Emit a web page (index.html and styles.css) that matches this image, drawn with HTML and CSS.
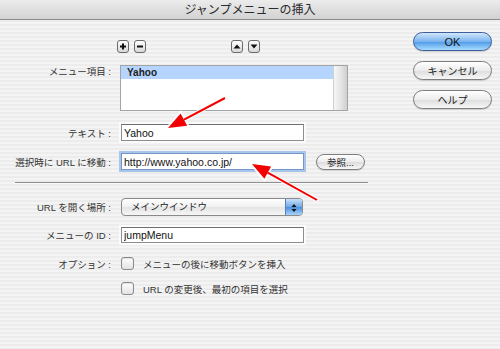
FILE: index.html
```html
<!DOCTYPE html>
<html lang="ja">
<head>
    <meta charset="UTF-8">
    <title>ジャンプメニューの挿入</title>
    <link rel="stylesheet" href="styles.css">
</head>
<body>
    <div class="dialog">
        <div class="titlebar">ジャンプメニューの挿入</div>

        <div class="content">
            <form class="form">
                <!-- add / remove / reorder -->
                <div class="tools">
                    <div class="tool-group">
                        <button type="button" class="tool">
                            <svg viewBox="0 0 12 13" width="12" height="13"><path d="M6 3.5v6M3 6.5h6" stroke="#111" stroke-width="2"/></svg>
                        </button>
                        <button type="button" class="tool">
                            <svg viewBox="0 0 12 13" width="12" height="13"><path d="M3 6.5h6" stroke="#111" stroke-width="2"/></svg>
                        </button>
                    </div>
                    <div class="tool-group">
                        <button type="button" class="tool">
                            <svg viewBox="0 0 12 13" width="12" height="13"><path d="M2.5 8.5L6 4.5l3.5 4z" fill="#111"/></svg>
                        </button>
                        <button type="button" class="tool">
                            <svg viewBox="0 0 12 13" width="12" height="13"><path d="M2.5 4.5L6 8.5l3.5-4z" fill="#111"/></svg>
                        </button>
                    </div>
                </div>

                <div class="row row-list">
                    <label class="label">メニュー項目 :</label>
                    <div class="listbox">
                        <ul class="list-items">
                            <li class="list-item selected">Yahoo</li>
                        </ul>
                        <div class="scrolltrack"></div>
                    </div>
                </div>

                <div class="row row-text">
                    <label class="label">テキスト :</label>
                    <input class="field field-plain" type="text" value="Yahoo">
                </div>

                <div class="row row-url">
                    <label class="label">選択時に URL に移動 :</label>
                    <input class="field field-focus" type="text" value="http://www.yahoo.co.jp/">
                    <button type="button" class="pill small">参照...</button>
                </div>

                <div class="separator"></div>

                <div class="row row-select">
                    <label class="label">URL を開く場所 :</label>
                    <div class="select">
                        <span class="select-value">メインウインドウ</span>
                        <span class="stepper">
                            <svg viewBox="0 0 16 18" width="16" height="18">
                                <path d="M5.5 8l2.5-3 2.5 3zM5.5 10l2.5 3 2.5-3z" fill="#111"/>
                            </svg>
                        </span>
                    </div>
                </div>

                <div class="row row-id">
                    <label class="label">メニューの ID :</label>
                    <input class="field field-plain" type="text" value="jumpMenu">
                </div>

                <div class="row row-check">
                    <label class="label">オプション :</label>
                    <span class="checkbox"></span>
                    <span class="check-text">メニューの後に移動ボタンを挿入</span>
                </div>

                <div class="row row-check second">
                    <span class="label"></span>
                    <span class="checkbox"></span>
                    <span class="check-text">URL の変更後、最初の項目を選択</span>
                </div>
            </form>

            <div class="actions">
                <button type="button" class="pill default">OK</button>
                <button type="button" class="pill">キャンセル</button>
                <button type="button" class="pill">ヘルプ</button>
            </div>
        </div>

        <!-- red annotation arrows drawn over the dialog -->
        <svg class="arrows" viewBox="0 0 500 349" width="500" height="349">
            <g stroke="#fff" stroke-width="4" stroke-linecap="round" fill="#fff" opacity="0.8">
                <line x1="225" y1="98" x2="184" y2="119.6"/>
                <polygon points="168,128 187.2,125.8 180.6,113.4"/>
                <line x1="317" y1="200" x2="267.7" y2="172.7"/>
                <polygon points="252,164 271.1,166.6 264.4,178.8"/>
            </g>
            <g stroke="#f20000" stroke-width="2" fill="#f20000">
                <line x1="225" y1="98" x2="184" y2="119.6"/>
                <polygon points="168,128 187.2,125.8 180.6,113.4" stroke="none"/>
                <line x1="317" y1="200" x2="267.7" y2="172.7"/>
                <polygon points="252,164 271.1,166.6 264.4,178.8" stroke="none"/>
            </g>
        </svg>
    </div>
</body>
</html>
```

FILE: styles.css
```css
/* Aqua style sheet dialog */
body {
    margin: 0;
    font-family: "Liberation Sans", "Noto Sans CJK JP", sans-serif;
    font-size: 9.5px;
    color: #222;
}

.dialog {
    position: relative;
    width: 500px;
    height: 349px;
    overflow: hidden;
    background: repeating-linear-gradient(#ececec 0 2px, #f4f4f4 2px 4px);
}

.titlebar {
    height: 19px;
    line-height: 20px;
    text-align: center;
    font-size: 12px;
    color: #2a2a2a;
    background: linear-gradient(#ececec, #d2d2d2);
    border-bottom: 1px solid #8c8c8c;
}

.content {
    display: flex;
}

.form {
    flex: 1;
    margin: 0;
}

/* little square buttons above the list */
.tools {
    display: flex;
    gap: 85px;
    margin-top: 20px;
    padding-left: 117px;
    height: 13px;
}

.tool-group {
    display: flex;
    gap: 5px;
}

.tool {
    width: 12px;
    height: 13px;
    padding: 0;
    border: 1px solid #6a6a6a;
    border-radius: 3px;
    background: linear-gradient(#ffffff, #d8d8d8);
    display: flex;
    box-sizing: border-box;
    align-items: center;
    justify-content: center;
}

.tool svg {
    flex: none;
}

/* rows */
.row {
    display: flex;
    align-items: center;
}

.label {
    width: 111px;
    margin-right: 9px;
    text-align: right;
    white-space: nowrap;
    color: #333;
}

.row-list {
    align-items: flex-start;
    margin-top: 12px;
}

.row-list .label {
    line-height: 14px;
}

.listbox {
    display: flex;
    width: 228px;
    height: 46px;
    box-sizing: border-box;
    border: 1px solid #a4a4a4;
    background: #fff;
}

.list-items {
    flex: 1;
    margin: 0;
    padding: 0;
    list-style: none;
}

.list-item {
    height: 13px;
    line-height: 13px;
    padding-left: 6px;
    font-size: 10px;
    font-weight: bold;
    color: #222;
}

.list-item.selected {
    background: #b5d5ff;
}

.scrolltrack {
    width: 13px;
    border-left: 1px solid #d0d0d0;
    background: linear-gradient(90deg, #f6f6f6, #e6e6e6 50%, #cfcfcf);
}

/* text fields */
.field {
    width: 183px;
    height: 17px;
    margin: 0 0 0 1px;
    padding: 0 2px;
    box-sizing: border-box;
    border: 1px solid #8e8e8e;
    border-top-color: #6e6e6e;
    background: #fff;
    font-family: "Liberation Sans", sans-serif;
    font-size: 10.5px;
    color: #111;
    outline: none;
}

.field-plain {
    box-shadow: 0 0 0 2px #fbfbfb;
}

.field-focus {
    border-color: #7397c6;
    box-shadow: 0 0 0 2px #a9c6ea;
}

.row-text {
    margin-top: 13px;
}

.row-url {
    margin-top: 12px;
}

.row-id {
    margin-top: 11px;
}

.row-id .field {
    height: 16px;
}

.separator {
    margin: 12px 0 0 15px;
    width: 353px;
    height: 1px;
    background: #8e8e8e;
    border-bottom: 1px solid #fafafa;
}

/* popup menu */
.row-select {
    margin-top: 14px;
}

.select {
    display: flex;
    width: 182px;
    height: 18px;
    margin-left: 1px;
    box-sizing: border-box;
    border: 1px solid #8a8a8a;
    border-radius: 4px;
    overflow: hidden;
    background: linear-gradient(#ffffff, #f0f0f0 50%, #e4e4e4 51%, #f6f6f6);
}

.select-value {
    flex: 1;
    padding-left: 9px;
    line-height: 16px;
    color: #222;
}

.stepper {
    width: 16px;
    display: flex;
    border-left: 1px solid #5c7fb4;
    background: linear-gradient(#c9e1fa, #6fa7e6 50%, #4b8fde 51%, #a9d3fb);
}

/* checkboxes */
.row-check {
    margin-top: 14px;
    height: 13px;
}

.row-check.second {
    margin-top: 12px;
}

.checkbox {
    width: 13px;
    height: 13px;
    margin-left: 1px;
    box-sizing: border-box;
    border: 1px solid #8a8a8a;
    border-radius: 3px;
    background: linear-gradient(#ffffff, #e2e2e2);
    box-shadow: inset 0 1px 1px rgba(0, 0, 0, 0.12);
}

.check-text {
    margin-left: 9px;
    color: #333;
}

/* pill buttons */
.actions {
    display: flex;
    flex-direction: column;
    gap: 10px;
    width: 79px;
    margin: 12px 8px 0 0;
}

.pill {
    height: 19px;
    padding: 0;
    border: 1px solid #7e7e7e;
    border-radius: 10px;
    background: linear-gradient(#ffffff, #ececec 50%, #dcdcdc 51%, #f7f7f7);
    box-shadow: 0 1px 1px rgba(0, 0, 0, 0.15);
    font-family: "Liberation Sans", "Noto Sans CJK JP", sans-serif;
    font-size: 10px;
    color: #222;
}

.pill.default {
    border-color: #3d5e9d;
    background: linear-gradient(#d2e7fb, #7ab4ee 50%, #4c98e6 51%, #a8dcff);
    font-size: 11px;
    color: #111;
}

.pill.small {
    width: 49px;
    height: 16px;
    margin-left: 12px;
    border-radius: 8px;
    font-size: 9.5px;
}

/* annotation overlay */
.arrows {
    position: absolute;
    top: 0;
    left: 0;
    pointer-events: none;
}
```
